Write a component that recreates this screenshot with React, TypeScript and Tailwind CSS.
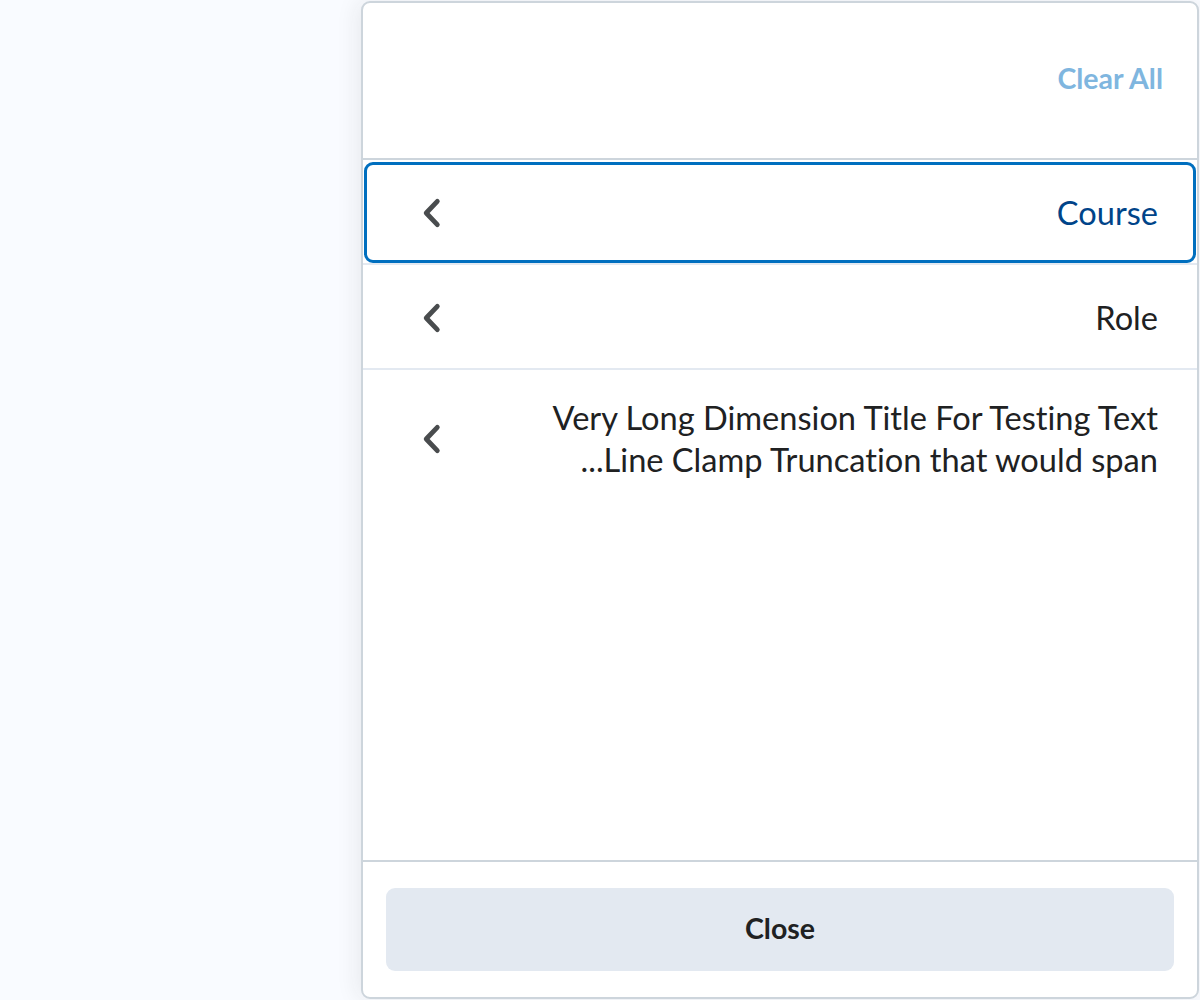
import type { ReactNode } from "react";

function Chevron() {
  return (
    <svg width="20" height="32" viewBox="0 0 20 32" fill="none" aria-hidden="true">
      <path
        d="M15.3 4.3 L4.2 16 L15.3 27.7"
        stroke="#494c4e"
        strokeWidth="4.8"
        strokeLinecap="round"
        strokeLinejoin="round"
      />
    </svg>
  );
}

function DimensionRow({
  children,
  focused = false,
  last = false,
}: {
  children: ReactNode;
  focused?: boolean;
  last?: boolean;
}) {
  return (
    <div className={`px-px pt-[2px] ${last ? "" : "border-b-2 border-[#e3e9f1]"}`}>
      <div
        className={`flex min-h-[101px] items-center justify-between gap-6 rounded-[9px] border-[3px] py-[22px] pr-[35px] pl-[55px] ${
          focused ? "border-[#006fbf]" : "border-transparent"
        }`}
      >
        <div
          className={`text-right text-[32.6px] leading-[41.5px] [font-variant-ligatures:none] ${
            focused ? "text-[#004489]" : "text-[#202122]"
          }`}
        >
          {children}
        </div>
        <div className="flex shrink-0">
          <Chevron />
        </div>
      </div>
    </div>
  );
}

export default function App() {
  return (
    <div
      className="flex h-[1000px] w-full justify-end bg-[#f9fbff] py-px pr-px"
      style={{ fontFamily: "Lato, 'Noto Sans', sans-serif" }}
    >
      <div
        dir="rtl"
        className="flex h-[998px] w-[838px] flex-col overflow-hidden rounded-[9px] border-2 border-[#cdd5dc] bg-white shadow-[-4px_0_22px_rgba(32,33,34,0.08)]"
      >
        <div className="flex h-[157px] shrink-0 items-center border-b-2 border-[#cdd5dc] px-[34px] pb-[5px]">
          <button type="button" className="text-[28.5px] font-bold text-[#7fb6df]">
            Clear All
          </button>
        </div>

        <div className="flex-1">
          <DimensionRow focused>Course</DimensionRow>
          <DimensionRow>Role</DimensionRow>
          <DimensionRow last>
            Very Long Dimension Title For Testing Text
            <br />
            Line Clamp Truncation that would span...
          </DimensionRow>
        </div>

        <div className="shrink-0 border-t-2 border-[#cdd5dc] px-[23px] pt-[26px] pb-[26px]">
          <button
            type="button"
            className="flex h-[83px] w-full items-center justify-center rounded-[9px] bg-[#e3e9f1] pb-[3px] text-[28.5px] font-bold text-[#202122]"
          >
            Close
          </button>
        </div>
      </div>
    </div>
  );
}
